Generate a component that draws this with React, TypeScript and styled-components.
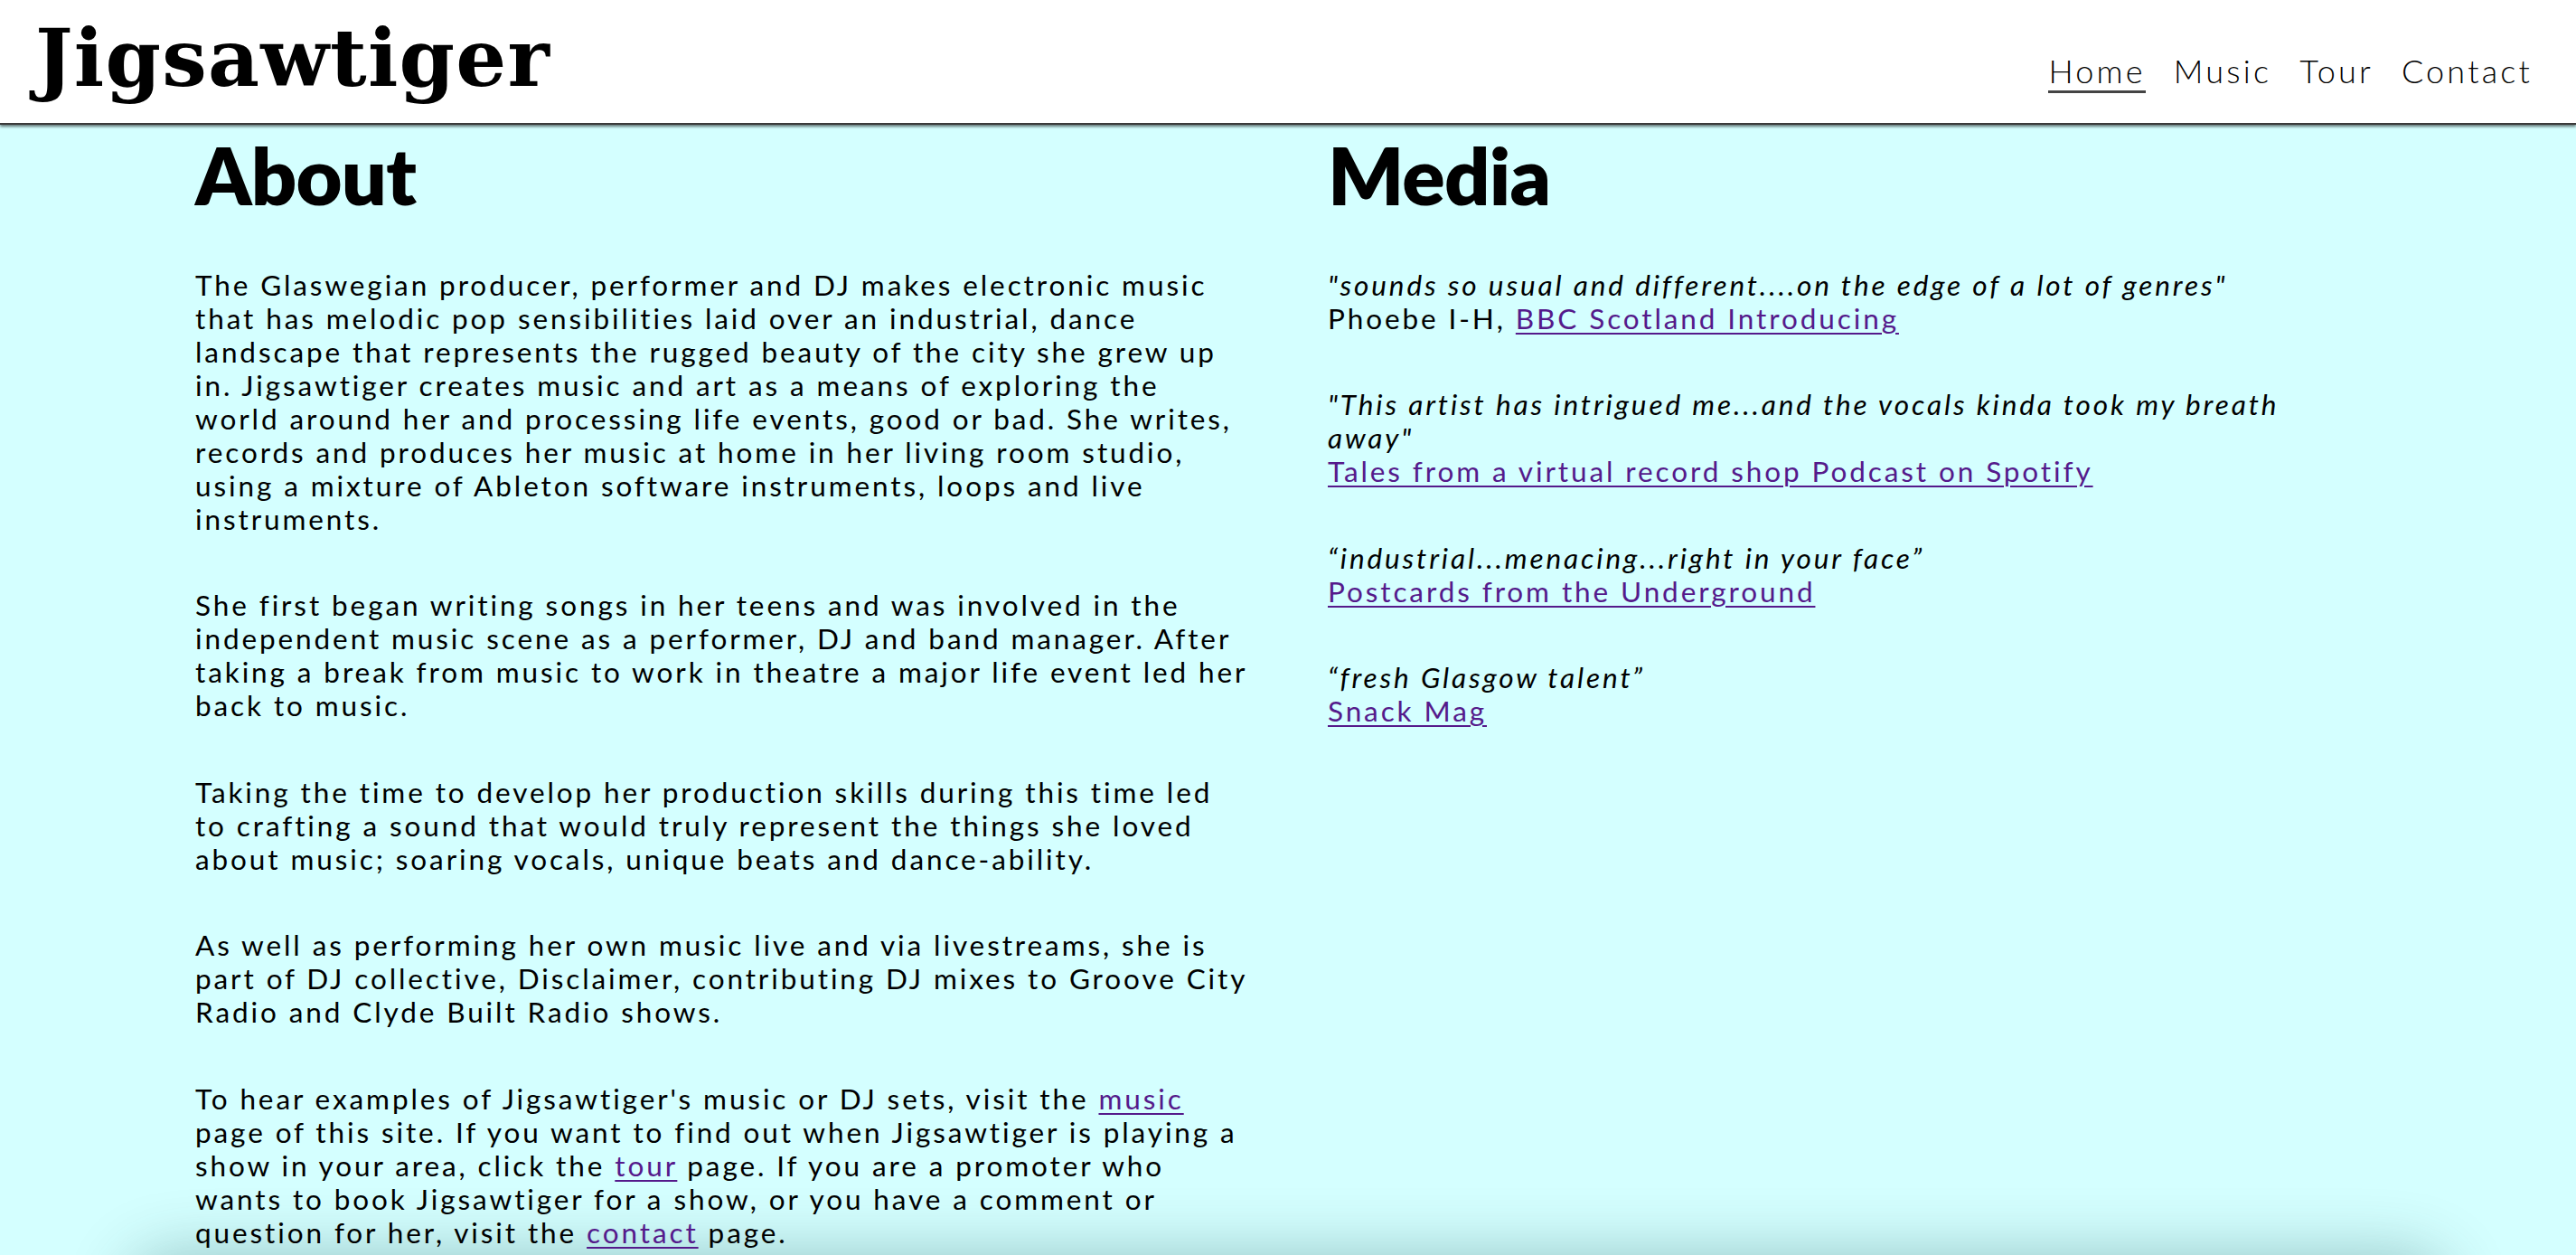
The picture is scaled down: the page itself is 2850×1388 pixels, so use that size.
import React from "react";
import styled, { createGlobalStyle } from "styled-components";

const GlobalStyle = createGlobalStyle`
  html, body {
    margin: 0;
    padding: 0;
    background: #d4ffff;
  }
  body {
    font-family: Lato, "Open Sans", sans-serif;
    color: #000;
  }
`;

const Header = styled.header`
  height: 136px;
  background: #ffffff;
  border-bottom: 2px solid #3a3a3a;
  box-shadow: 0 2px 3px rgba(0, 0, 0, 0.55);
  display: flex;
  justify-content: space-between;
  align-items: flex-start;
  padding: 0 48px 0 39px;
  position: relative;
  z-index: 2;
`;

const Logo = styled.div`
  margin-top: 20px;
  font-family: "DejaVu Serif", "Liberation Serif", serif;
  font-weight: 700;
  font-size: 88px;
  line-height: 88px;
  letter-spacing: 1.2px;
  color: #000;
`;

const Nav = styled.nav`
  margin-top: 57px;
  display: flex;
  gap: 31px;
`;

const NavLink = styled.a<{ $active?: boolean }>`
  font-family: Lato, sans-serif;
  font-weight: 300;
  font-size: 36px;
  line-height: 1.2;
  letter-spacing: 3.2px;
  color: #000;
  text-decoration: none;
  border-bottom: 3px solid ${(p) => (p.$active ? "#444" : "transparent")};
`;

const Main = styled.main`
  min-height: calc(100vh - 138px);
  box-sizing: border-box;
  max-width: 2418px;
  margin: 0 auto;
  padding-top: 3px;
  display: grid;
  grid-template-columns: 1165px 1165px;
  column-gap: 88px;
  align-items: start;
`;

const Column = styled.section`
  display: flex;
  flex-direction: column;
`;

const Heading = styled.h1`
  margin: 0 0 50px 0;
  font-family: Lato, sans-serif;
  font-weight: 800;
  font-size: 88px;
  line-height: 1.2;
  letter-spacing: -0.8px;
`;

const Stack = styled.div`
  display: flex;
  flex-direction: column;
  gap: 58.5px;
`;

const Para = styled.p`
  margin: 0;
  font-size: 31.5px;
  line-height: 37px;
  letter-spacing: 2.9px;
  white-space: nowrap;
`;

const Quote = styled.em`
  font-style: italic;
`;

const Link = styled.a`
  color: #551a8b;
  text-decoration: underline;
  text-decoration-thickness: 2px;
  text-underline-offset: 4px;
`;

const Footer = styled.footer`
  margin: 0 5%;
  height: 240px;
  border-radius: 48px;
  background: #d4ffff;
  box-shadow: 0 0 70px rgba(0, 60, 60, 0.3);
`;

export default function App() {
  return (
    <>
      <GlobalStyle />
      <Header>
        <Logo>Jigsawtiger</Logo>
        <Nav>
          <NavLink href="#" $active>
            Home
          </NavLink>
          <NavLink href="#">Music</NavLink>
          <NavLink href="#">Tour</NavLink>
          <NavLink href="#">Contact</NavLink>
        </Nav>
      </Header>
      <Main>
        <Column>
          <Heading>About</Heading>
          <Stack>
            <Para>
              The Glaswegian producer, performer and DJ makes electronic music
              <br />
              that has melodic pop sensibilities laid over an industrial, dance
              <br />
              landscape that represents the rugged beauty of the city she grew up
              <br />
              in. Jigsawtiger creates music and art as a means of exploring the
              <br />
              world around her and processing life events, good or bad. She writes,
              <br />
              records and produces her music at home in her living room studio,
              <br />
              using a mixture of Ableton software instruments, loops and live
              <br />
              instruments.
            </Para>
            <Para>
              She first began writing songs in her teens and was involved in the
              <br />
              independent music scene as a performer, DJ and band manager. After
              <br />
              taking a break from music to work in theatre a major life event led her
              <br />
              back to music.
            </Para>
            <Para>
              Taking the time to develop her production skills during this time led
              <br />
              to crafting a sound that would truly represent the things she loved
              <br />
              about music; soaring vocals, unique beats and dance-ability.
            </Para>
            <Para>
              As well as performing her own music live and via livestreams, she is
              <br />
              part of DJ collective, Disclaimer, contributing DJ mixes to Groove City
              <br />
              Radio and Clyde Built Radio shows.
            </Para>
            <Para>
              To hear examples of Jigsawtiger's music or DJ sets, visit the{" "}
              <Link href="#">music</Link>
              <br />
              page of this site. If you want to find out when Jigsawtiger is playing a
              <br />
              show in your area, click the <Link href="#">tour</Link> page. If you are a
              promoter who
              <br />
              wants to book Jigsawtiger for a show, or you have a comment or
              <br />
              question for her, visit the <Link href="#">contact</Link> page.
            </Para>
          </Stack>
        </Column>
        <Column>
          <Heading>Media</Heading>
          <Stack>
            <Para>
              <Quote>"sounds so usual and different....on the edge of a lot of genres"</Quote>
              <br />
              Phoebe I-H, <Link href="#">BBC Scotland Introducing</Link>
            </Para>
            <Para>
              <Quote>
                "This artist has intrigued me...and the vocals kinda took my breath
                <br />
                away"
              </Quote>
              <br />
              <Link href="#">Tales from a virtual record shop Podcast on Spotify</Link>
            </Para>
            <Para>
              <Quote>“industrial...menacing...right in your face”</Quote>
              <br />
              <Link href="#">Postcards from the Underground</Link>
            </Para>
            <Para>
              <Quote>“fresh Glasgow talent”</Quote>
              <br />
              <Link href="#">Snack Mag</Link>
            </Para>
          </Stack>
        </Column>
      </Main>
      <Footer />
    </>
  );
}
